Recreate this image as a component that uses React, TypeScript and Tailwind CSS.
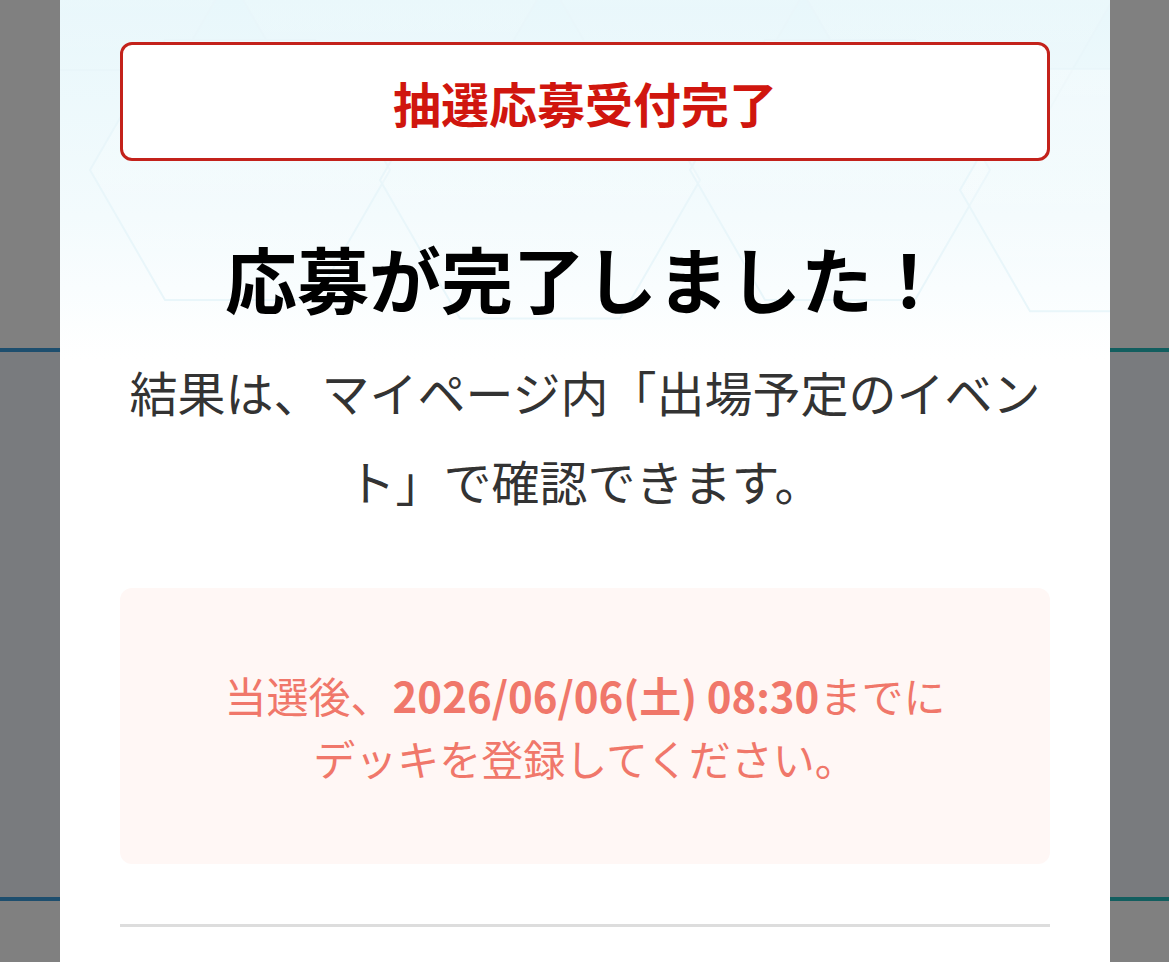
import React from "react";

const jp = { fontFamily: '"Noto Sans CJK JP", "Noto Sans", sans-serif' };

// faint hexagon pattern behind the top of the dialog
function HexPattern() {
  const hexes = [
    { x: 40, y: -60, r: 150 },
    { x: 330, y: -40, r: 170 },
    { x: 620, y: -70, r: 160 },
    { x: 900, y: -30, r: 170 },
    { x: 180, y: 170, r: 150 },
    { x: 480, y: 180, r: 160 },
    { x: 780, y: 170, r: 150 },
    { x: 1040, y: 190, r: 140 },
  ];
  const pts = (cx: number, cy: number, r: number) =>
    Array.from({ length: 6 }, (_, i) => {
      const a = (Math.PI / 3) * i;
      return `${cx + r * Math.cos(a)},${cy + r * Math.sin(a)}`;
    }).join(" ");
  return (
    <svg
      className="absolute inset-x-0 top-0 h-[360px] w-full"
      viewBox="0 0 1050 360"
      preserveAspectRatio="none"
    >
      <defs>
        <linearGradient id="fade" x1="0" y1="0" x2="0" y2="1">
          <stop offset="0" stopColor="#e8f7fb" />
          <stop offset="0.6" stopColor="#f3fbfd" />
          <stop offset="1" stopColor="#ffffff" />
        </linearGradient>
        <linearGradient id="fadeLines" x1="0" y1="0" x2="0" y2="1">
          <stop offset="0" stopColor="#ffffff" stopOpacity="0.7" />
          <stop offset="1" stopColor="#ffffff" stopOpacity="0" />
        </linearGradient>
      </defs>
      <rect width="1050" height="360" fill="url(#fade)" />
      {hexes.map((h, i) => (
        <polygon
          key={i}
          points={pts(h.x, h.y, h.r)}
          fill="url(#fadeLines)"
          fillOpacity="0.4"
          stroke="#e9f6fa"
          strokeWidth="2"
        />
      ))}
    </svg>
  );
}

export default function App() {
  return (
    <div className="relative h-[962px] w-[1169px] overflow-hidden" style={jp}>
      {/* page behind the overlay */}
      <div className="flex h-full flex-col">
        <div className="h-[348px] bg-[#808080]" />
        <div className="flex h-[4px]">
          <div className="w-[60px] bg-[#1d4e6e]" />
          <div className="flex-1" />
          <div className="w-[59px] bg-[#125e5f]" />
        </div>
        <div className="h-[545px] bg-[#797b7e]" />
        <div className="flex h-[4px]">
          <div className="w-[60px] bg-[#1d4e6e]" />
          <div className="flex-1" />
          <div className="w-[59px] bg-[#125e5f]" />
        </div>
        <div className="flex-1 bg-[#808080]" />
      </div>

      {/* dialog */}
      <div className="absolute bottom-0 left-[60px] top-0 w-[1050px] overflow-hidden bg-white">
        <HexPattern />
        <div className="relative flex flex-col px-[60px] pt-[42px]">
          <div className="flex h-[119px] items-center justify-center rounded-[12px] border-[3px] border-[#c3221b] bg-white">
            <span className="text-[48px] font-bold leading-none text-[#d0160e]">
              抽選応募受付完了
            </span>
          </div>

          <h1 className="mt-[63px] text-center text-[72px] font-bold leading-[105px] text-black">
            応募が完了しました！
          </h1>

          <p className="mt-[18px] text-center text-[48px] leading-[89px] text-[#333333]">
            結果は、マイページ内「出場予定のイベント」で確認できます。
          </p>

          <div className="mt-[63px] flex h-[276px] items-center justify-center rounded-[12px] bg-[#fff7f5]">
            <p className="text-center text-[42px] leading-[63px] text-[#f0776a]">
              当選後、<span className="font-bold">2026/06/06(土) 08:30</span>までに
              <br />
              デッキを登録してください。
            </p>
          </div>

          <div className="mt-[60px] h-[3px] bg-[#dddddd]" />
        </div>
      </div>
    </div>
  );
}
